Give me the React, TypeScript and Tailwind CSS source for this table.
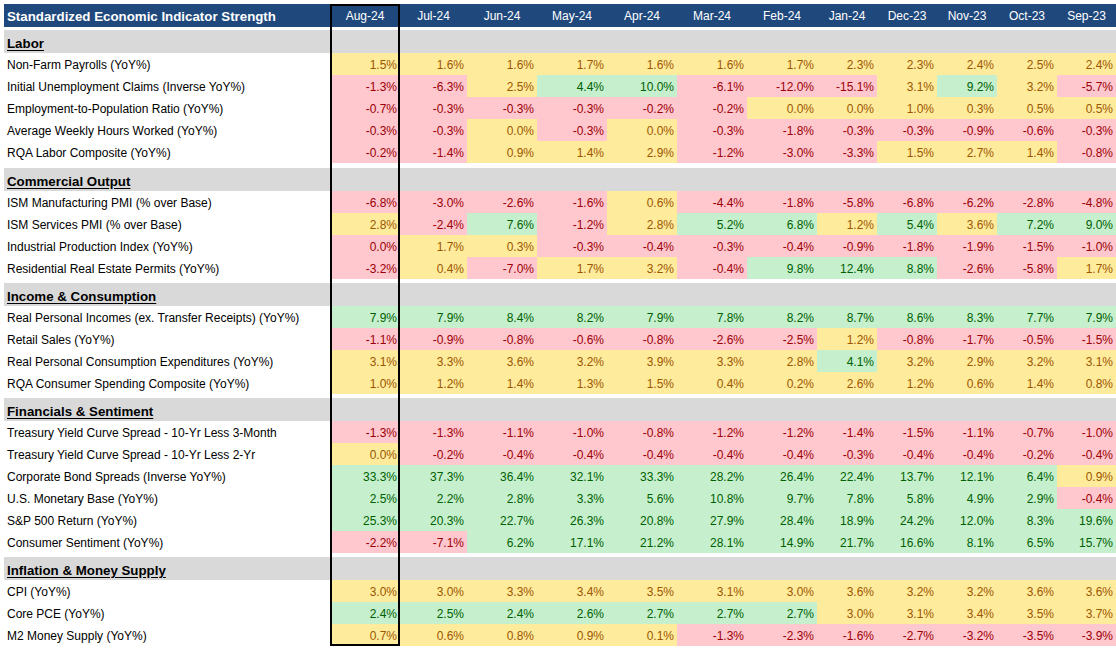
import React from 'react';

type Group = { title: string; gap: string; rows: [string, string][] };

const months = ['Aug-24', 'Jul-24', 'Jun-24', 'May-24', 'Apr-24', 'Mar-24', 'Feb-24', 'Jan-24', 'Dec-23', 'Nov-23', 'Oct-23', 'Sep-23'];

// column widths, Aug-24 first (it carries the black frame)
const widths = ['w-[70px]', 'w-[67px]', 'w-[70px]', 'w-[70px]', 'w-[70px]', 'w-[70px]', 'w-[70px]', 'w-[60px]', 'w-[60px]', 'w-[60px]', 'w-[60px]', 'w-[59px]'];

const tone: Record<string, string> = {
  r: 'bg-[#FFC7CE] text-[#9C0006]',
  y: 'bg-[#FFEB9C] text-[#9C5700]',
  g: 'bg-[#C6EFCE] text-[#006100]',
};

const groups: Group[] = [
  {
    title: 'Labor',
    gap: 'h-[3px]',
    rows: [
      ['Non-Farm Payrolls (YoY%)', '1.5y 1.6y 1.6y 1.7y 1.6y 1.6y 1.7y 2.3y 2.3y 2.4y 2.5y 2.4y'],
      ['Initial Unemployment Claims (Inverse YoY%)', '-1.3r -6.3r 2.5y 4.4g 10.0g -6.1r -12.0r -15.1r 3.1y 9.2g 3.2y -5.7r'],
      ['Employment-to-Population Ratio (YoY%)', '-0.7r -0.3r -0.3r -0.3r -0.2r -0.2r 0.0y 0.0y 1.0y 0.3y 0.5y 0.5y'],
      ['Average Weekly Hours Worked (YoY%)', '-0.3r -0.3r 0.0y -0.3r 0.0y -0.3r -1.8r -0.3r -0.3r -0.9r -0.6r -0.3r'],
      ['RQA Labor Composite (YoY%)', '-0.2r -1.4r 0.9y 1.4y 2.9y -1.2r -3.0r -3.3r 1.5y 2.7y 1.4y -0.8r'],
    ],
  },
  {
    title: 'Commercial Output',
    gap: 'h-[5px]',
    rows: [
      ['ISM Manufacturing PMI (% over Base)', '-6.8r -3.0r -2.6r -1.6r 0.6y -4.4r -1.8r -5.8r -6.8r -6.2r -2.8r -4.8r'],
      ['ISM Services PMI (% over Base)', '2.8y -2.4r 7.6g -1.2r 2.8y 5.2g 6.8g 1.2y 5.4g 3.6y 7.2g 9.0g'],
      ['Industrial Production Index (YoY%)', '0.0r 1.7y 0.3y -0.3r -0.4r -0.3r -0.4r -0.9r -1.8r -1.9r -1.5r -1.0r'],
      ['Residential Real Estate Permits (YoY%)', '-3.2r 0.4y -7.0r 1.7y 3.2y -0.4r 9.8g 12.4g 8.8g -2.6r -5.8r 1.7y'],
    ],
  },
  {
    title: 'Income & Consumption',
    gap: 'h-[4px]',
    rows: [
      ['Real Personal Incomes (ex. Transfer Receipts) (YoY%)', '7.9g 7.9g 8.4g 8.2g 7.9g 7.8g 8.2g 8.7g 8.6g 8.3g 7.7g 7.9g'],
      ['Retail Sales (YoY%)', '-1.1r -0.9r -0.8r -0.6r -0.8r -2.6r -2.5r 1.2y -0.8r -1.7r -0.5r -1.5r'],
      ['Real Personal Consumption Expenditures (YoY%)', '3.1y 3.3y 3.6y 3.2y 3.9y 3.3y 2.8y 4.1g 3.2y 2.9y 3.2y 3.1y'],
      ['RQA Consumer Spending Composite (YoY%)', '1.0y 1.2y 1.4y 1.3y 1.5y 0.4y 0.2y 2.6y 1.2y 0.6y 1.4y 0.8y'],
    ],
  },
  {
    title: 'Financials & Sentiment',
    gap: 'h-[4px]',
    rows: [
      ['Treasury Yield Curve Spread - 10-Yr Less 3-Month', '-1.3r -1.3r -1.1r -1.0r -0.8r -1.2r -1.2r -1.4r -1.5r -1.1r -0.7r -1.0r'],
      ['Treasury Yield Curve Spread - 10-Yr Less 2-Yr', '0.0y -0.2r -0.4r -0.4r -0.4r -0.4r -0.4r -0.3r -0.4r -0.4r -0.2r -0.4r'],
      ['Corporate Bond Spreads (Inverse YoY%)', '33.3g 37.3g 36.4g 32.1g 33.3g 28.2g 26.4g 22.4g 13.7g 12.1g 6.4g 0.9y'],
      ['U.S. Monetary Base (YoY%)', '2.5g 2.2g 2.8g 3.3g 5.6g 10.8g 9.7g 7.8g 5.8g 4.9g 2.9g -0.4r'],
      ['S&P 500 Return (YoY%)', '25.3g 20.3g 22.7g 26.3g 20.8g 27.9g 28.4g 18.9g 24.2g 12.0g 8.3g 19.6g'],
      ['Consumer Sentiment (YoY%)', '-2.2r -7.1r 6.2g 17.1g 21.2g 28.1g 14.9g 21.7g 16.6g 8.1g 6.5g 15.7g'],
    ],
  },
  {
    title: 'Inflation & Money Supply',
    gap: 'h-[4px]',
    rows: [
      ['CPI (YoY%)', '3.0y 3.0y 3.3y 3.4y 3.5y 3.1y 3.0y 3.6y 3.2y 3.2y 3.6y 3.6y'],
      ['Core PCE (YoY%)', '2.4g 2.5g 2.4g 2.6g 2.7g 2.7g 2.7g 3.0y 3.1y 3.4y 3.5y 3.7y'],
      ['M2 Money Supply (YoY%)', '0.7y 0.6y 0.8y 0.9y 0.1y -1.3r -2.3r -1.6r -2.7r -3.2r -3.5r -3.9r'],
    ],
  },
];

const frame = 'border-x-2 border-black';

const GapRow: React.FC<{ h: string }> = ({ h }) => (
  <div className={`flex ${h}`}>
    <div className="w-[330px]" />
    <div className={`w-[70px] ${frame}`} />
  </div>
);

const SectionRow: React.FC<{ title: string }> = ({ title }) => (
  <div className="flex h-[23px]">
    <div className="w-[330px] pl-[4px]">
      <div className="h-full bg-[#D9D9D9] flex items-end pb-[2px] pl-[3px] leading-[15px] text-[13.3px] font-bold underline underline-offset-[2px] text-black">
        {title}
      </div>
    </div>
    <div className={`w-[70px] bg-[#D9D9D9] ${frame}`} />
    <div className="flex-1 bg-[#D9D9D9]" />
  </div>
);

const DataRow: React.FC<{ label: string; cells: string; last: boolean }> = ({ label, cells, last }) => {
  const vals = cells.split(' ');
  return (
    <div className="flex h-[22px]">
      <div className="w-[330px] pl-[7px] flex items-end pb-[2px] leading-[15px] text-[12px] text-black whitespace-nowrap">
        {label}
      </div>
      {vals.map((v, i) => {
        const c = v.slice(-1);
        const num = v.slice(0, -1) + '%';
        const first = i === 0;
        return (
          <div
            key={i}
            className={`${widths[i]} ${tone[c]} flex items-end justify-end leading-[15px] text-[12px] ${
              first ? `${frame} pr-px ${last ? 'border-b-2 pb-0' : 'pb-[2px]'}` : 'pr-[3px] pb-[2px]'
            }`}
          >
            {num}
          </div>
        );
      })}
    </div>
  );
};

export default function App() {
  return (
    <div className="w-[1116px] h-[648px] bg-white pt-[4px] overflow-hidden" style={{ fontFamily: '"Liberation Sans", Arial, sans-serif' }}>
      {/* Header */}
      <div className="flex h-[23px] text-white">
        <div className="w-[330px] pl-[4px]">
          <div className="h-full bg-[#1F497D] flex items-end pb-[3px] pl-[3px] leading-[15px] text-[13.3px] font-bold whitespace-nowrap">
            Standardized Economic Indicator Strength
          </div>
        </div>
        {months.map((m, i) => (
          <div
            key={m}
            className={`${widths[i]} bg-[#1F497D] flex items-end justify-center pb-[3px] leading-[15px] text-[12px] ${
              i === 0 ? `${frame} border-t-2` : ''
            }`}
          >
            {m}
          </div>
        ))}
      </div>

      {groups.map((g, gi) => (
        <React.Fragment key={g.title}>
          <GapRow h={g.gap} />
          <SectionRow title={g.title} />
          {g.rows.map(([label, cells], ri) => (
            <DataRow
              key={label}
              label={label}
              cells={cells}
              last={gi === groups.length - 1 && ri === g.rows.length - 1}
            />
          ))}
        </React.Fragment>
      ))}
    </div>
  );
}
